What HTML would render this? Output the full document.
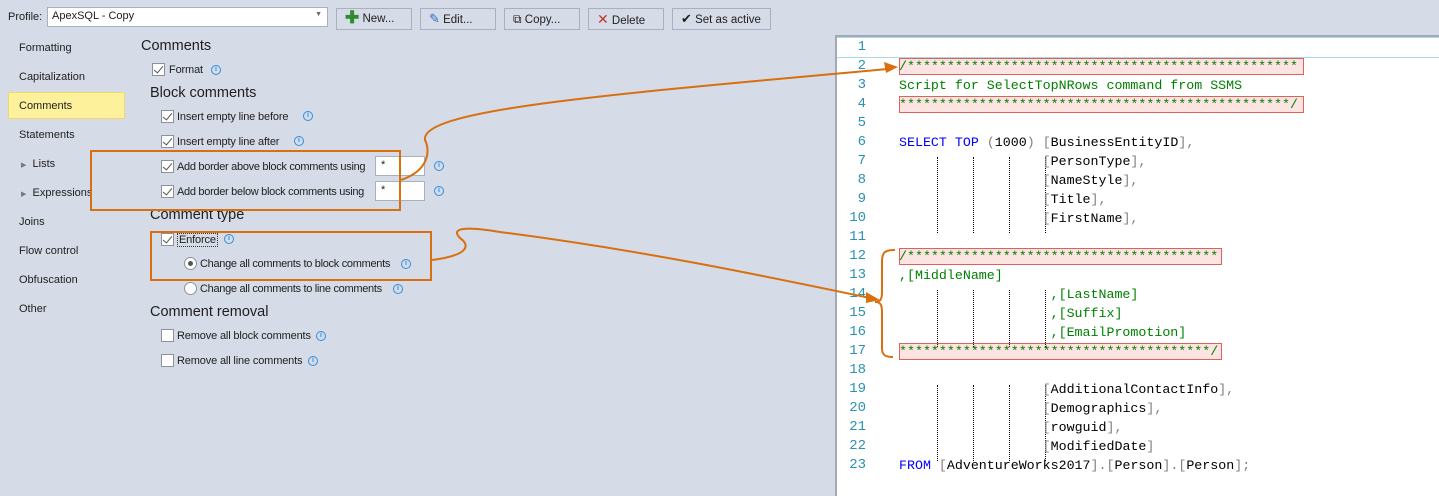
<!DOCTYPE html>
<html><head><meta charset="utf-8"><style>
*{margin:0;padding:0;box-sizing:border-box}
body{width:1439px;height:496px;background:#d6dbe8;font-family:"Liberation Sans",sans-serif;font-size:11px;color:#1e1e1e;position:relative;overflow:hidden}
.a{position:absolute;white-space:nowrap}
.btn{position:absolute;top:8px;height:22px;border:1px solid #a9b0bf;background:#d6dbe8;font-size:11.5px;line-height:20px;padding-left:8px}
.nav{position:absolute;left:19px;font-size:11px}
.h{position:absolute;font-size:14.5px;color:#1e1e1e}
.cb{position:absolute;width:13px;height:13px;border:1px solid #8c919c;background:#fff}
.cb.c::after{content:"";position:absolute;left:3px;top:0px;width:4px;height:8px;border:solid #555;border-width:0 1.5px 1.5px 0;transform:rotate(40deg)}
.lbl{position:absolute;font-size:11px;letter-spacing:-0.15px;white-space:nowrap}
.i{position:absolute;width:10px;height:10px;border:1px solid #2f8fdc;border-radius:50%;color:#2f8fdc;font-size:7px;line-height:8px;text-align:center;font-weight:bold}
.rd{position:absolute;width:13px;height:13px;border:1px solid #8c919c;border-radius:50%;background:#fff}
#ed{position:absolute;left:835px;top:35px;width:604px;height:461px;background:#fff;border-left:2px solid #a2a8b6;border-top:2px solid #a2a8b6}
.ln{position:absolute;left:0;width:29px;text-align:right;color:#2b91af;font-family:"Liberation Mono",monospace;font-size:14px}
.code{position:absolute;left:62px;font-family:"Liberation Mono",monospace;font-size:13.3px;white-space:pre;color:#000}
.g{color:#008000}.k{color:#0000ff}.b{color:#808080}
.rb{position:absolute;left:62px;height:17px;background:#fce4e2;border:1px solid #e0605a}
.dot{position:absolute;width:0;border-left:1px dotted #000}
</style></head><body>
<div class="a" style="left:8px;top:11px;font-size:11px">Profile:</div>
<div class="a" style="left:47px;top:7px;width:281px;height:20px;background:#fff;border:1px solid #a9b0bf;padding:2px 4px;font-size:11px">ApexSQL - Copy<span style="position:absolute;right:5px;top:3px;font-size:7px;color:#666">▼</span></div>
<div class="btn" style="left:336px;width:76px"><span style="color:#2e8b2e;font-weight:bold;font-size:17px;line-height:18px;vertical-align:top">✚</span> New...</div>
<div class="btn" style="left:420px;width:76px"><span style="color:#2f6fc4;font-size:13px">✎</span> Edit...</div>
<div class="btn" style="left:504px;width:76px"><span style="font-size:12px">⧉</span> Copy...</div>
<div class="btn" style="left:588px;width:76px"><span style="color:#c0392b;font-size:14px">✕</span> Delete</div>
<div class="btn" style="left:672px;width:99px"><span style="font-size:13px">✔</span> Set as active</div>

<div class="a" style="left:8px;top:92px;width:117px;height:27px;background:#fdf19c;border:1px solid #f0d66e"></div>
<div class="nav" style="top:42px">Formatting</div>
<div class="nav" style="top:71px">Capitalization</div>
<div class="nav" style="top:100px">Comments</div>
<div class="nav" style="top:129px">Statements</div>
<div class="nav" style="top:158px;left:21px"><span style="font-size:7px;color:#777">▶</span>&nbsp; Lists</div>
<div class="nav" style="top:187px;left:21px"><span style="font-size:7px;color:#777">▶</span>&nbsp; Expressions</div>
<div class="nav" style="top:216px">Joins</div>
<div class="nav" style="top:245px">Flow control</div>
<div class="nav" style="top:274px">Obfuscation</div>
<div class="nav" style="top:303px">Other</div>

<div class="h" style="left:141px;top:38px">Comments</div>
<div class="cb c" style="left:152px;top:63px"></div><div class="lbl" style="left:169px;top:64px">Format</div><div class="i" style="left:211px;top:65px">i</div>
<div class="h" style="left:150px;top:85px">Block comments</div>
<div class="cb c" style="left:161px;top:110px"></div><div class="lbl" style="left:177px;top:111px">Insert empty line before</div><div class="i" style="left:303px;top:111px">i</div>
<div class="cb c" style="left:161px;top:135px"></div><div class="lbl" style="left:177px;top:136px">Insert empty line after</div><div class="i" style="left:294px;top:136px">i</div>
<div class="cb c" style="left:161px;top:160px"></div><div class="lbl" style="left:177px;top:161px;letter-spacing:-0.3px">Add border above block comments using</div>
<div class="a" style="left:375px;top:156px;width:50px;height:20px;background:#fff;border:1px solid #a9b0bf;padding:2px 5px">*</div><div class="i" style="left:434px;top:161px">i</div>
<div class="cb c" style="left:161px;top:185px"></div><div class="lbl" style="left:177px;top:186px;letter-spacing:-0.3px">Add border below block comments using</div>
<div class="a" style="left:375px;top:181px;width:50px;height:20px;background:#fff;border:1px solid #a9b0bf;padding:2px 5px">*</div><div class="i" style="left:434px;top:186px">i</div>
<div class="h" style="left:150px;top:207px">Comment type</div>
<div class="cb c" style="left:161px;top:233px"></div><div class="lbl" style="left:177px;top:233px;border:1px dotted #333;padding:0 1px">Enforce</div><div class="i" style="left:224px;top:234px">i</div>
<div class="rd" style="left:184px;top:257px"><div style="position:absolute;left:3px;top:3px;width:5px;height:5px;border-radius:50%;background:#555"></div></div><div class="lbl" style="left:200px;top:258px;letter-spacing:-0.3px">Change all comments to block comments</div><div class="i" style="left:401px;top:259px">i</div>
<div class="rd" style="left:184px;top:282px"></div><div class="lbl" style="left:200px;top:283px;letter-spacing:-0.3px">Change all comments to line comments</div><div class="i" style="left:393px;top:284px">i</div>
<div class="h" style="left:150px;top:304px">Comment removal</div>
<div class="cb" style="left:161px;top:329px"></div><div class="lbl" style="left:177px;top:330px">Remove all block comments</div><div class="i" style="left:316px;top:331px">i</div>
<div class="cb" style="left:161px;top:354px"></div><div class="lbl" style="left:177px;top:355px">Remove all line comments</div><div class="i" style="left:308px;top:356px">i</div>

<div class="a" style="left:90px;top:150px;width:311px;height:61px;border:2px solid #d9700f"></div>
<div class="a" style="left:150px;top:231px;width:282px;height:50px;border:2px solid #d9700f"></div>

<div id="ed">
<div class="a" style="left:0;top:0;width:604px;height:21px;border:1px solid #a8dbe3;border-left:none"></div>
<div class="rb" style="top:21px;width:405px"></div>
<div class="rb" style="top:59px;width:405px"></div>
<div class="rb" style="top:211px;width:323px"></div>
<div class="rb" style="top:306px;width:323px"></div>
<div class="dot" style="left:100px;top:120px;height:76px"></div><div class="dot" style="left:136px;top:120px;height:76px"></div><div class="dot" style="left:172px;top:120px;height:76px"></div><div class="dot" style="left:208px;top:120px;height:76px"></div>
<div class="dot" style="left:100px;top:253px;height:57px"></div><div class="dot" style="left:136px;top:253px;height:57px"></div><div class="dot" style="left:172px;top:253px;height:57px"></div><div class="dot" style="left:208px;top:253px;height:57px"></div>
<div class="dot" style="left:100px;top:348px;height:76px"></div><div class="dot" style="left:136px;top:348px;height:76px"></div><div class="dot" style="left:172px;top:348px;height:76px"></div><div class="dot" style="left:208px;top:348px;height:76px"></div>
<div class="ln" style="top:1px;line-height:19px">1<br>2<br>3<br>4<br>5<br>6<br>7<br>8<br>9<br>10<br>11<br>12<br>13<br>14<br>15<br>16<br>17<br>18<br>19<br>20<br>21<br>22<br>23</div>
<div class="code" style="top:1px;line-height:19px">
<span class="g">/*************************************************</span>
<span class="g">Script for SelectTopNRows command from SSMS</span>
<span class="g">*************************************************/</span>

<span class="k">SELECT</span> <span class="k">TOP</span> <span class="b">(</span>1000<span class="b">)</span> <span class="b">[</span>BusinessEntityID<span class="b">],</span>
                  <span class="b">[</span>PersonType<span class="b">],</span>
                  <span class="b">[</span>NameStyle<span class="b">],</span>
                  <span class="b">[</span>Title<span class="b">],</span>
                  <span class="b">[</span>FirstName<span class="b">],</span>

<span class="g">/***************************************</span>
<span class="g">,[MiddleName]</span>
                   <span class="g">,[LastName]</span>
                   <span class="g">,[Suffix]</span>
                   <span class="g">,[EmailPromotion]</span>
<span class="g">***************************************/</span>

                  <span class="b">[</span>AdditionalContactInfo<span class="b">],</span>
                  <span class="b">[</span>Demographics<span class="b">],</span>
                  <span class="b">[</span>rowguid<span class="b">],</span>
                  <span class="b">[</span>ModifiedDate<span class="b">]</span>
<span class="k">FROM</span> <span class="b">[</span>AdventureWorks2017<span class="b">].[</span>Person<span class="b">].[</span>Person<span class="b">];</span></div>
</div>

<svg class="a" style="left:0;top:0" width="1439" height="496">
<g fill="none" stroke="#d9700f" stroke-width="2">
<path d="M401,180 C430,170 430,150 425,140 C420,110 600,95 888,69"/>
<path d="M432,260 C470,255 470,245 460,238 C450,228 465,226 500,232 C640,250 760,275 870,298"/>
<path d="M895,250 C885,250 882,252 882,262 L882,292 C882,300 880,302 875,302 C880,302 882,304 882,312 L882,348 C882,355 885,357 893,357"/>
</g>
<path d="M898,67 L884,62 L886,73 Z" fill="#d9700f"/>
<path d="M880,300 L866,292 L866,303 Z" fill="#d9700f"/>
</svg>
</body></html>
